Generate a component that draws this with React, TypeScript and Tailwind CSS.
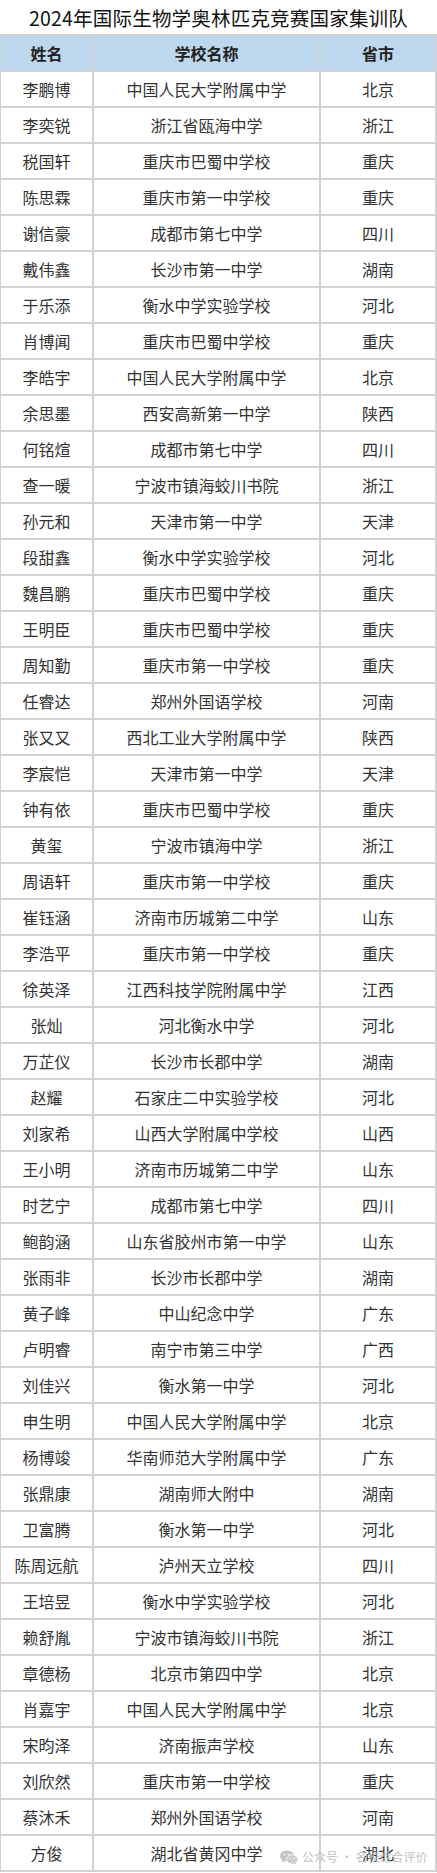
import React from "react";

const rows: [string, string, string][] = [
  ["李鹏博", "中国人民大学附属中学", "北京"],
  ["李奕锐", "浙江省瓯海中学", "浙江"],
  ["税国轩", "重庆市巴蜀中学校", "重庆"],
  ["陈思霖", "重庆市第一中学校", "重庆"],
  ["谢信豪", "成都市第七中学", "四川"],
  ["戴伟鑫", "长沙市第一中学", "湖南"],
  ["于乐添", "衡水中学实验学校", "河北"],
  ["肖博闻", "重庆市巴蜀中学校", "重庆"],
  ["李皓宇", "中国人民大学附属中学", "北京"],
  ["余思墨", "西安高新第一中学", "陕西"],
  ["何铭煊", "成都市第七中学", "四川"],
  ["查一暖", "宁波市镇海蛟川书院", "浙江"],
  ["孙元和", "天津市第一中学", "天津"],
  ["段甜鑫", "衡水中学实验学校", "河北"],
  ["魏昌鹏", "重庆市巴蜀中学校", "重庆"],
  ["王明臣", "重庆市巴蜀中学校", "重庆"],
  ["周知勤", "重庆市第一中学校", "重庆"],
  ["任睿达", "郑州外国语学校", "河南"],
  ["张又又", "西北工业大学附属中学", "陕西"],
  ["李宸恺", "天津市第一中学", "天津"],
  ["钟有依", "重庆市巴蜀中学校", "重庆"],
  ["黄玺", "宁波市镇海中学", "浙江"],
  ["周语轩", "重庆市第一中学校", "重庆"],
  ["崔钰涵", "济南市历城第二中学", "山东"],
  ["李浩平", "重庆市第一中学校", "重庆"],
  ["徐英泽", "江西科技学院附属中学", "江西"],
  ["张灿", "河北衡水中学", "河北"],
  ["万芷仪", "长沙市长郡中学", "湖南"],
  ["赵耀", "石家庄二中实验学校", "河北"],
  ["刘家希", "山西大学附属中学校", "山西"],
  ["王小明", "济南市历城第二中学", "山东"],
  ["时艺宁", "成都市第七中学", "四川"],
  ["鲍韵涵", "山东省胶州市第一中学", "山东"],
  ["张雨非", "长沙市长郡中学", "湖南"],
  ["黄子峰", "中山纪念中学", "广东"],
  ["卢明睿", "南宁市第三中学", "广西"],
  ["刘佳兴", "衡水第一中学", "河北"],
  ["申生明", "中国人民大学附属中学", "北京"],
  ["杨博竣", "华南师范大学附属中学", "广东"],
  ["张鼎康", "湖南师大附中", "湖南"],
  ["卫富腾", "衡水第一中学", "河北"],
  ["陈周远航", "泸州天立学校", "四川"],
  ["王培昱", "衡水中学实验学校", "河北"],
  ["赖舒胤", "宁波市镇海蛟川书院", "浙江"],
  ["章德杨", "北京市第四中学", "北京"],
  ["肖嘉宇", "中国人民大学附属中学", "北京"],
  ["宋昀泽", "济南振声学校", "山东"],
  ["刘欣然", "重庆市第一中学校", "重庆"],
  ["蔡沐禾", "郑州外国语学校", "河南"],
  ["方俊", "湖北省黄冈中学", "湖北"],
];

const font = { fontFamily: '"Noto Sans CJK SC", "Noto Sans", sans-serif' };

function WeChatIcon() {
  return (
    <svg width="18" height="15" viewBox="0 0 18 15" fill="#bdbdbd">
      <ellipse cx="7" cy="6" rx="7" ry="5.6" />
      <path d="M2.5 9.5 L1.8 12.5 L5 10.6 Z" />
      <ellipse cx="12.2" cy="9.4" rx="5.8" ry="4.6" fill="#c8c8c8" stroke="#fff" strokeWidth="0.8" />
      <path d="M15.5 12.5 L16.6 14.8 L13.6 13.4 Z" fill="#c8c8c8" />
      <circle cx="4.6" cy="4.6" r="0.9" fill="#fff" />
      <circle cx="9.2" cy="4.6" r="0.9" fill="#fff" />
      <circle cx="10.4" cy="8.6" r="0.75" fill="#fff" />
      <circle cx="14" cy="8.6" r="0.75" fill="#fff" />
    </svg>
  );
}

export default function App() {
  return (
    <div className="w-[437px] bg-white relative" style={font}>
      <div className="h-[34px] flex items-center justify-center pt-[2px] text-[19.5px] text-[#111] tracking-[0.2px]">
        2024年国际生物学奥林匹克竞赛国家集训队
      </div>
      <div className="grid grid-cols-[91px_225px_114px] gap-[2px] bg-[#d2d2d2] pl-[1px] pr-[2px] pt-[2px] pb-[2px] auto-rows-[34px]">
        {["姓名", "学校名称", "省市"].map((h) => (
          <div
            key={h}
            className="bg-[#bdd7ee] flex items-center justify-center text-[16px] font-bold text-[#222]"
          >
            {h}
          </div>
        ))}
        {rows.map(([n, s, p], i) => (
          <React.Fragment key={i}>
            <div className="bg-white flex items-center justify-center text-[16px] text-[#333]">{n}</div>
            <div className="bg-white flex items-center justify-center text-[16px] text-[#333]">{s}</div>
            <div className="bg-white flex items-center justify-center text-[16px] text-[#333]">{p}</div>
          </React.Fragment>
        ))}
      </div>
      <div className="absolute left-[280px] top-[1848px] flex items-center gap-[4px] pointer-events-none whitespace-nowrap opacity-90">
        <WeChatIcon />
        <span className="text-[12px] text-[#bcbcbc] whitespace-nowrap">公众号 · 名校综合评价</span>
      </div>
    </div>
  );
}
